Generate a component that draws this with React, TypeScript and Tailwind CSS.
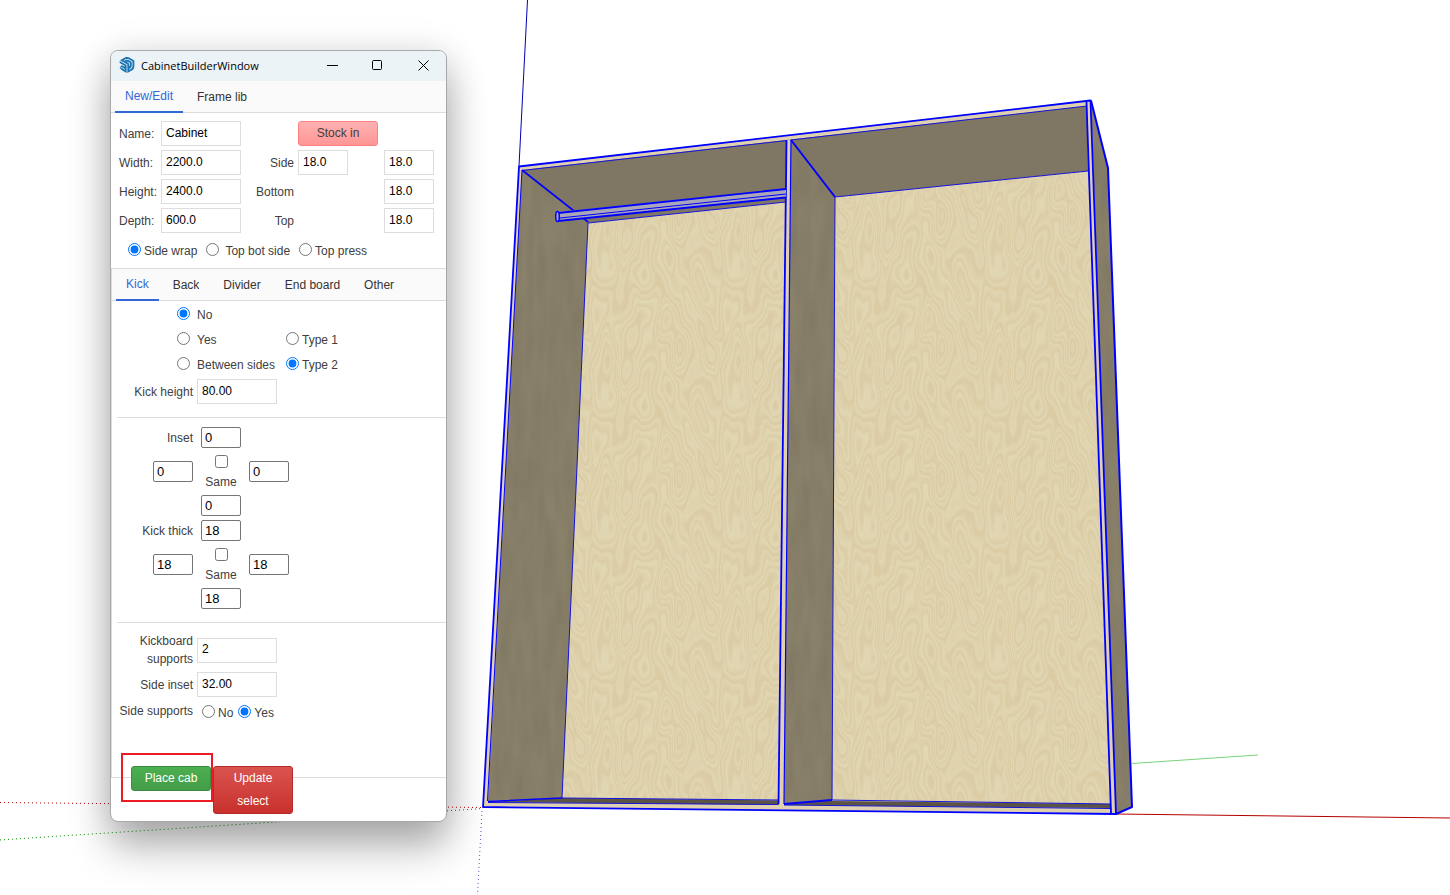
import { useState } from 'react'
import type { ReactNode } from 'react'
import { SiSketchup } from 'react-icons/si'

const TOP_TABS = ['New/Edit', 'Frame lib']
const DETAIL_TABS = ['Kick', 'Back', 'Divider', 'End board', 'Other']

type FieldProps = {
  label: string
  value: string
  className?: string
}

function Field({ label, value, className = 'w-20' }: FieldProps) {
  return (
    <input
      type="text"
      aria-label={label}
      defaultValue={value}
      className={`h-[25px] border border-[#dddddd] bg-white px-1 pb-0.5 text-black outline-none focus:border-blue-400 ${className}`}
    />
  )
}

function SmallField({ label, value }: FieldProps) {
  return (
    <input
      type="text"
      aria-label={label}
      defaultValue={value}
      className="h-[21px] w-10 rounded-xs border border-[#767676] bg-white px-[3px] text-[13px] text-black outline-none"
    />
  )
}

type RadioProps = {
  name: string
  checked?: boolean
  gap?: string
  children: ReactNode
}

function Radio({ name, checked, gap = 'gap-[3px]', children }: RadioProps) {
  return (
    <label className={`flex items-center ${gap}`}>
      <input type="radio" name={name} defaultChecked={checked} className="size-[13px]" />
      <span className="pt-[3px]">{children}</span>
    </label>
  )
}

type TabsProps = {
  tabs: string[]
  className: string
}

function Tabs({ tabs, className }: TabsProps) {
  const [active, setActive] = useState(tabs[0])

  return (
    <div role="tablist" className={`flex gap-1 border-b border-[#dddddd] bg-[#fafafa] px-1 ${className}`}>
      {tabs.map((tab) => (
        <button
          key={tab}
          type="button"
          role="tab"
          aria-selected={active === tab}
          onClick={() => setActive(tab)}
          className={
            active === tab
              ? '-mb-px h-8 border-b-2 border-[#3367d6] px-2.5 text-[#3367d6]'
              : 'h-8 px-2.5 text-[#333333]'
          }
        >
          {tab}
        </button>
      ))}
    </div>
  )
}

function TitleBar() {
  return (
    <div className="flex h-[30px] items-center bg-[#ebf3f7] pb-0.5 text-black">
      <SiSketchup className="ml-2 size-4 text-[#1c76b5]" />
      <h1 className="ml-1.5 pt-0.5 font-['Open_Sans','Noto_Sans',sans-serif] text-[11px]">CabinetBuilderWindow</h1>
      <div className="ml-auto flex">
        <button type="button" aria-label="Minimize" className="flex w-[45px] justify-center">
          <svg width="11" height="11" viewBox="0 0 11 11" stroke="currentColor" fill="none">
            <path d="M0 5.5h11" />
          </svg>
        </button>
        <button type="button" aria-label="Maximize" className="flex w-[45px] justify-center">
          <svg width="11" height="11" viewBox="0 0 11 11" stroke="currentColor" fill="none">
            <rect x="0.5" y="0.5" width="9" height="9" rx="1" />
          </svg>
        </button>
        <button type="button" aria-label="Close" className="flex w-[46px] justify-center">
          <svg width="11" height="11" viewBox="0 0 11 11" stroke="currentColor" fill="none">
            <path d="M0.5 0.5l10 10M10.5 0.5l-10 10" />
          </svg>
        </button>
      </div>
    </div>
  )
}

function SizeForm() {
  return (
    <div className="pt-2 pl-2">
      <div className="grid grid-cols-[42px_80px_57px_86px_50px] items-center gap-y-1">
        <span>Name:</span>
        <Field label="Name" value="Cabinet" />
        <span />
        <button
          type="button"
          className="h-[25px] w-20 rounded-[3px] border border-[#ff8080] bg-linear-to-b from-[#ffb0b0] to-[#ff9696] pb-0.5"
        >
          Stock in
        </button>
        <span />

        <span>Width:</span>
        <Field label="Width" value="2200.0" />
        <span className="pr-1 text-right">Side</span>
        <Field label="Left side thickness" value="18.0" className="w-[50px]" />
        <Field label="Right side thickness" value="18.0" className="w-[50px]" />

        <span>Height:</span>
        <Field label="Height" value="2400.0" />
        <span className="pr-1 text-right">Bottom</span>
        <span />
        <Field label="Bottom thickness" value="18.0" className="w-[50px]" />

        <span>Depth:</span>
        <Field label="Depth" value="600.0" />
        <span className="pr-1 text-right">Top</span>
        <span />
        <Field label="Top thickness" value="18.0" className="w-[50px]" />
      </div>
      <div className="flex h-[35px] items-center gap-[9px] pb-[3px] pl-[9px]">
        <Radio name="wrap" checked>
          Side wrap
        </Radio>
        <Radio name="wrap" gap="gap-1.5">
          Top bot side
        </Radio>
        <Radio name="wrap">Top press</Radio>
      </div>
    </div>
  )
}

type SideInputsProps = {
  label: string
  value: string
}

function SideInputs({ label, value }: SideInputsProps) {
  return (
    <div className="grid grid-cols-[76px_40px_40px] items-center gap-x-2">
      <span className="text-right">{label}</span>
      <SmallField label={`${label} back`} value={value} />
      <span />
      <div className="flex justify-end">
        <SmallField label={`${label} left`} value={value} />
      </div>
      <label className="flex h-[47px] flex-col items-center pt-[7px] leading-[18px]">
        <input type="checkbox" className="size-[13px]" />
        <span className="pt-[5px]">Same</span>
      </label>
      <SmallField label={`${label} right`} value={value} />
      <span />
      <SmallField label={`${label} front`} value={value} />
    </div>
  )
}

function KickPanel() {
  return (
    <div className="pb-14 pl-[5px]">
      <div className="grid grid-cols-[109px_1fr] pl-[60px]">
        <div className="flex h-[25px] items-center">
          <Radio name="kick" checked gap="gap-[7px]">
            No
          </Radio>
        </div>
        <span />
        <div className="flex h-[25px] items-center">
          <Radio name="kick" gap="gap-[7px]">
            Yes
          </Radio>
        </div>
        <div className="flex items-center">
          <Radio name="type">Type 1</Radio>
        </div>
        <div className="flex h-[25px] items-center">
          <Radio name="kick" gap="gap-[7px]">
            Between sides
          </Radio>
        </div>
        <div className="flex items-center">
          <Radio name="type" checked>
            Type 2
          </Radio>
        </div>
      </div>
      <div className="mt-[3px] mb-[13px] grid grid-cols-[76px_1fr] items-center gap-x-1">
        <span className="text-right">Kick height</span>
        <Field label="Kick height" value="80.00" />
      </div>
      <hr className="border-[#dddddd]" />
      <div className="flex flex-col gap-1 pt-[9px] pb-[13px]">
        <SideInputs label="Inset" value="0" />
        <SideInputs label="Kick thick" value="18" />
      </div>
      <hr className="border-[#dddddd]" />
      <div className="grid grid-cols-[76px_1fr] items-center gap-1 pt-[9px] leading-[18px]">
        <span className="text-right">Kickboard supports</span>
        <Field label="Kickboard supports" value="2" />
        <span className="text-right">Side inset</span>
        <Field label="Side inset" value="32.00" />
        <span className="text-right whitespace-nowrap">Side supports</span>
        <div className="flex h-5 items-center gap-[5px] pl-[5px]">
          <Radio name="supports">No</Radio>
          <Radio name="supports" checked>
            Yes
          </Radio>
        </div>
      </div>
    </div>
  )
}

function CabinetWindow() {
  return (
    <section className="absolute top-[50px] left-[110px] w-[337px] overflow-hidden rounded-lg border border-[#a8a8a8] bg-white font-['Liberation_Sans',Arial,sans-serif] text-[12px] text-[#404040] shadow-[0_24px_40px_rgba(0,0,0,0.32),0_0_36px_rgba(0,0,0,0.10)]">
      <TitleBar />
      <Tabs tabs={TOP_TABS} className="h-8" />
      <SizeForm />
      <div className="border-b border-l border-[#dddddd]">
        <Tabs tabs={DETAIL_TABS} className="h-[33px] border-t" />
        <KickPanel />
      </div>
      <div className="relative -mt-3 flex items-start gap-0.5 pb-[7px] pl-5 text-white">
        <button
          type="button"
          className="h-[25px] w-20 rounded-[3px] border border-[#3d8b40] bg-linear-to-b from-[#4caf50] to-[#449d48] pb-0.5"
        >
          Place cab
        </button>
        <button
          type="button"
          className="h-12 w-20 rounded-[3px] border border-[#b52b27] bg-linear-to-b from-[#d9534f] to-[#c9302c] px-3 pb-0.5 leading-[23px]"
        >
          Update select
        </button>
        <div className="pointer-events-none absolute -top-[13px] left-2.5 h-[49px] w-[92px] border-2 border-[#ed1c24]" />
      </div>
    </section>
  )
}

function ModelView() {
  return (
    <svg
      className="absolute inset-0 h-full w-full"
      viewBox="0 0 1450 895"
      preserveAspectRatio="xMinYMin slice"
      fill="none"
      role="img"
      aria-label="Cabinet model"
    >
      <defs>
        {/* contour lines of a stretched noise field give the wood figure */}
        <filter id="grain" x="0" y="0" width="100%" height="100%" colorInterpolationFilters="sRGB">
          <feTurbulence
            type="fractalNoise"
            baseFrequency="0.038 0.0155"
            numOctaves="2"
            seed="12"
            stitchTiles="stitch"
          />
          <feColorMatrix values="0 0 0 0 0.8  0 0 0 0 0.7  0 0 0 0 0.52  1 0 0 0 0" />
          <feComponentTransfer>
            <feFuncA
              type="table"
              tableValues="0 .1 .3 0 .1 .3 .05 .15 .35 .05 .2 .32 0 .1 .3 0 .2 .35 .05 .15 .3 0 .1 .3 0 .2 .35 .05 .1 .3 0 .1 .3 0 .1 .3 0"
            />
          </feComponentTransfer>
        </filter>
        <filter id="darkGrain" x="0" y="0" width="100%" height="100%" colorInterpolationFilters="sRGB">
          <feTurbulence type="fractalNoise" baseFrequency="0.09 0.02" numOctaves="2" seed="3" />
          <feColorMatrix values="0 0 0 0 0.38  0 0 0 0 0.35  0 0 0 0 0.28  0.35 0 0 0 -0.08" />
        </filter>
        <pattern id="wood" x="565" y="165" width="131" height="131" patternUnits="userSpaceOnUse">
          <rect width="131" height="131" filter="url(#grain)" />
        </pattern>
        <clipPath id="sides">
          <path d="M522 170L588 223L562 798L488 801ZM791 140L835 197L832 800L784 804ZM1091 100L1108 168L1132 807L1116 814Z" />
        </clipPath>
      </defs>

      {/* axes */}
      <path d="M527.5 0L519 166" stroke="#0000b4" />
      <path d="M0 802.5L483 807.5" stroke="#b40000" strokeDasharray="1 3" />
      <path d="M0 840L483 808.5" stroke="#008c00" strokeDasharray="1 3" />
      <path d="M482 811L477.5 895" stroke="#5a50c8" strokeDasharray="1 3" />
      <path d="M1116 814L1450 818" stroke="#b40000" />
      <path d="M1132 763.5L1258 755" stroke="#78d278" />

      {/* panels */}
      <path d="M519 166L1090 100L1116 814L483 807Z" fill="#dfd1b0" />
      <path d="M522 170L1087 106L1088 171L835 197L588 223Z" fill="#7f7663" />
      <path d="M588 223L786 202L778 800L562 798ZM835 197L1088 171L1111 804L832 800Z" fill="#e1d7b3" />
      <path d="M588 223L786 202L778 800L562 798ZM835 197L1088 171L1111 804L832 800Z" fill="url(#wood)" />
      <path d="M487 802L562 798L1111 804V808L784 805Z" fill="#5b5444" />
      <path
        d="M522 170L588 223L562 798L488 801ZM791 140L835 197L832 800L784 804ZM1091 100L1108 168L1132 807L1116 814Z"
        fill="#8a816b"
      />
      <g clipPath="url(#sides)">
        <rect x="485" y="98" width="650" height="718" filter="url(#darkGrain)" />
      </g>
      <path d="M787 140H791L784 805H779Z" fill="#dfd1b0" />

      {/* thin edges */}
      <g stroke="#1414dc">
        <path d="M522 170.5L787 140.5M791 140L1087 106" />
        <path d="M588 223L786 202M588 223L562 798L778 800" />
        <path d="M835 197L1088 171M835 197L832 800L1111 804" />
        <path d="M488 802.5L778 804.5M784 805L1111 808.5" />
        <path d="M522 170L487.5 801" stroke="#0000ff" />
        <path d="M791 140L784 804" stroke="#0000ff" strokeWidth="1.2" />
      </g>

      {/* selected outline */}
      <g stroke="#0000ff" strokeWidth="2" strokeLinejoin="round">
        <path d="M519 166.5L1090.5 100.5L1116 814L483 807Z" strokeWidth="1.8" />
        <path d="M1091 100.5L1108 168L1132 807L1116 814" />
        <path d="M522 170L588 222M488 801.5L562 798" strokeWidth="1.6" />
        <path d="M786.5 140L778.5 804" strokeWidth="1.8" />
        <path d="M791 140L835 197M784 804L832 800" />
        <path d="M1086.5 102L1111 813" strokeWidth="1.8" />
      </g>

      {/* hanging rail */}
      <path d="M558 212L786 189V198L558 221Z" fill="#a9a6b8" />
      <path d="M558 213L786 189M558 221L786 197.5" stroke="#0000ff" strokeWidth="1.8" />
      <path d="M560 218L786 194" stroke="#0000ff" />
      <ellipse cx="557.5" cy="216.5" rx="1.8" ry="5" fill="#a9a6b8" stroke="#0000ff" strokeWidth="1.5" />
    </svg>
  )
}

export default function App() {
  return (
    <main className="relative min-h-screen overflow-hidden bg-white">
      <ModelView />
      <CabinetWindow />
    </main>
  )
}
